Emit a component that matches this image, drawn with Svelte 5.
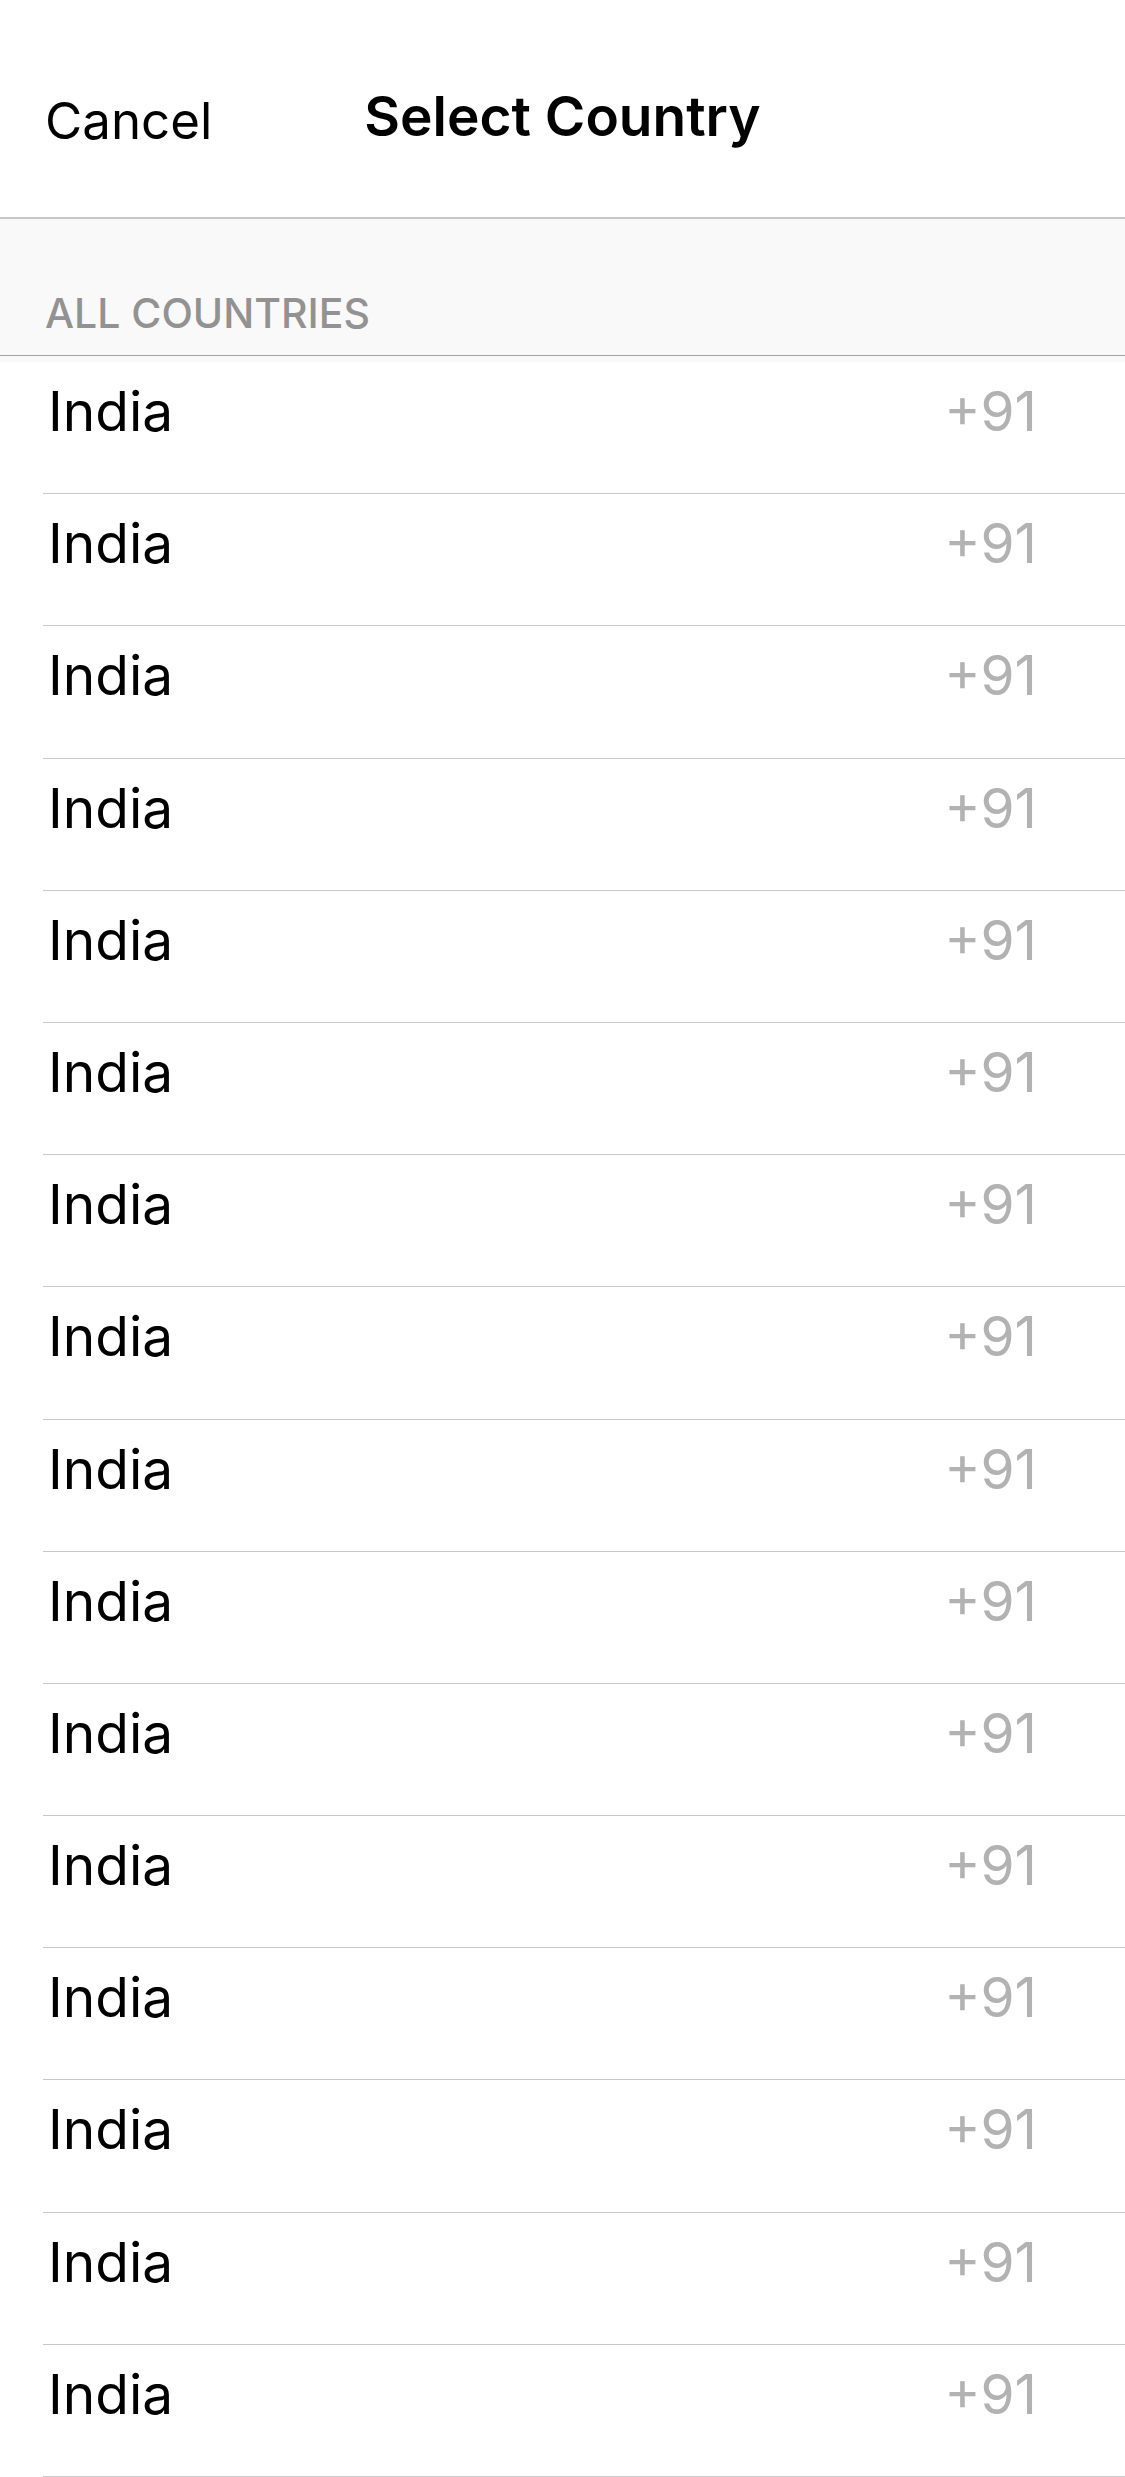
<script>
  const countries = Array.from({ length: 16 }, () => ({ name: 'India', code: '+91' }));
</script>

<main>
  <header>
    <button class="cancel" type="button">Cancel</button>
    <h1>Select Country</h1>
  </header>
  <h2>ALL COUNTRIES</h2>
  <ul>
    {#each countries as country}
      <li>
        <button class="row" type="button">
          <span>{country.name}</span>
          <span class="code">{country.code}</span>
        </button>
      </li>
    {/each}
  </ul>
</main>

<style>
  :global(body) {
    margin: 0;
    background: #fff;
  }
  main {
    display: flex;
    flex-direction: column;
    min-height: 100vh;
    font-family: Inter, "Liberation Sans", sans-serif;
    color: #000;
  }
  button {
    border: 0;
    margin: 0;
    background: none;
    font: inherit;
    color: inherit;
    text-align: left;
    cursor: pointer;
  }
  header {
    display: grid;
    grid-template-columns: 1fr auto 1fr;
    align-items: start;
    padding: 84px 45px 66px;
    border-bottom: 2px solid #c6c6c6;
  }
  .cancel {
    justify-self: start;
    padding: 7px 0 0;
    font-size: 51px;
    line-height: 60px;
  }
  h1 {
    margin: 0;
    font-size: 55px;
    line-height: 64px;
    font-weight: 600;
  }
  h2 {
    margin: 0;
    padding: 70px 45px 18px;
    background: #f9f9f9;
    border-bottom: 1px solid #a2a2a2;
    color: #929292;
    font-size: 41px;
    line-height: 48px;
    font-weight: 500;
  }
  ul {
    display: flex;
    flex: 1;
    flex-direction: column;
    list-style: none;
    margin: 0;
    padding: 0 0 0 43px;
    border-top: 6px solid #f9f9f9;
  }
  li {
    display: flex;
    flex: 1;
    border-bottom: 1px solid #c8c8c8;
  }
  .row {
    display: flex;
    flex: 1;
    justify-content: space-between;
    align-items: flex-start;
    padding: 17px 88px 50px 5px;
    font-size: 55px;
    line-height: 64px;
  }
  .code {
    color: #b2b2b2;
  }
</style>
